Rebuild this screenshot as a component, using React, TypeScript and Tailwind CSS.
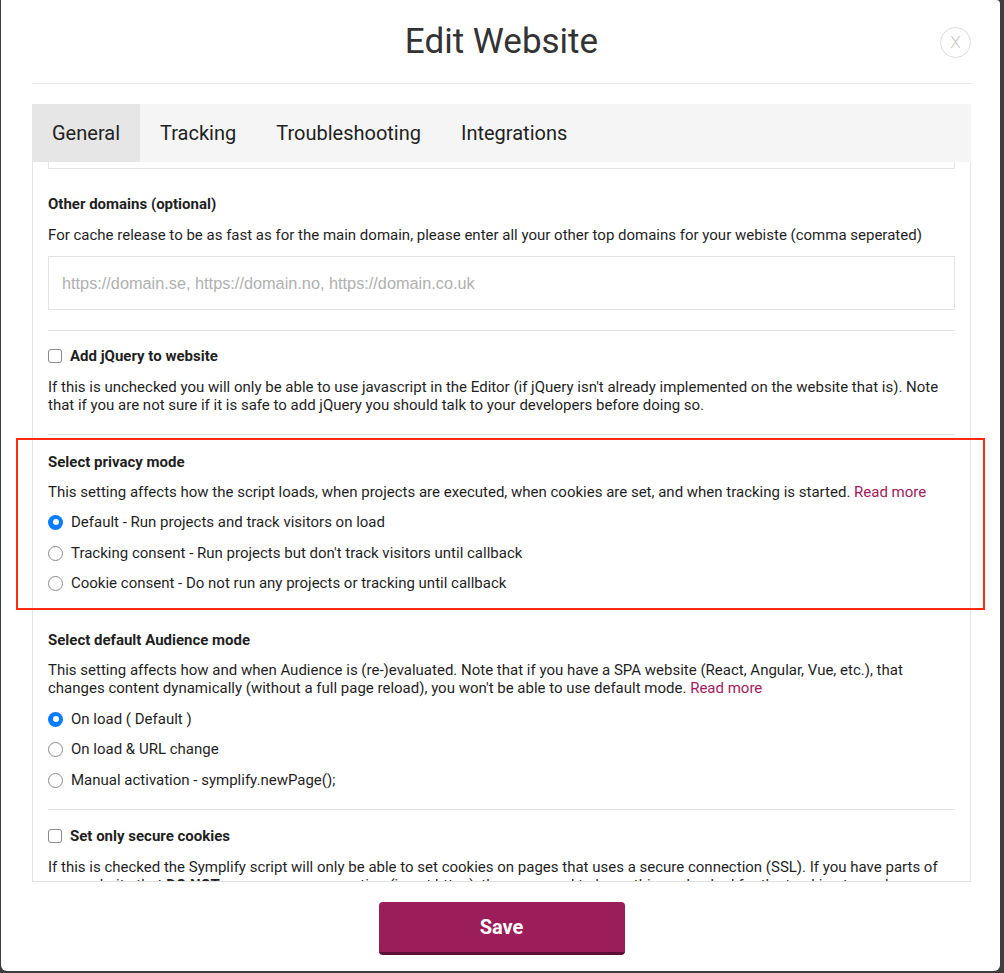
import React from "react";

const Radio = ({ checked }: { checked?: boolean }) =>
  checked ? (
    <span className="w-[15px] h-[15px] rounded-full bg-[#0a7cff] flex items-center justify-center shrink-0">
      <span className="w-[6px] h-[6px] rounded-full bg-white" />
    </span>
  ) : (
    <span className="w-[15px] h-[15px] rounded-full border border-[#8a8a8a] bg-white shrink-0" />
  );

const Checkbox = () => (
  <span className="w-[14px] h-[14px] rounded-[3px] border border-[#8a8a8a] bg-white shrink-0" />
);

const RadioRow = ({ checked, label, mt }: { checked?: boolean; label: string; mt: string }) => (
  <div className={`flex items-center gap-[8px] h-[18px] ${mt}`}>
    <Radio checked={checked} />
    <span>{label}</span>
  </div>
);

export default function App() {
  return (
    <div
      className="relative w-[1004px] h-[973px] bg-[#3d3d3d] text-[#1f1f1f]"
      style={{ fontFamily: "Roboto, 'Noto Sans', sans-serif" }}
    >
      <div className="ml-[1px] w-[999px] h-[971px] bg-white rounded-b-[6px] rounded-tr-[4px] pl-[31px] pr-[29px] flex flex-col">
        {/* Header */}
        <div className="relative h-[84px] flex items-center justify-center border-b border-[#e3e3e3]">
          <h1 className="text-[35px] leading-none text-[#333]">Edit Website</h1>
          <div className="absolute right-0 top-[27px] w-[31px] h-[31px] rounded-full border border-[#dcdcdc] flex items-center justify-center text-[#c8c8c8] text-[17px] font-light">
            X
          </div>
        </div>

        {/* Tabs */}
        <div className="mt-[20px] h-[58px] bg-[#f5f5f5] flex text-[20px] text-[#222]">
          <div className="px-[20px] flex items-center bg-[#e6e6e6]">General</div>
          <div className="px-[20px] flex items-center">Tracking</div>
          <div className="px-[20px] flex items-center">Troubleshooting</div>
          <div className="px-[20px] flex items-center">Integrations</div>
        </div>

        {/* Scroll panel */}
        <div className="h-[720px] border-x border-b border-[#e3e3e3] overflow-hidden px-[15px] text-[15px] leading-[18px]">
          <div className="h-[7px] border-x border-b border-[#e3e3e3]" />

          <div className="mt-[26px] font-bold">Other domains (optional)</div>
          <div className="mt-[13px]">
            For cache release to be as fast as for the main domain, please enter all your other top domains for your webiste (comma seperated)
          </div>
          <div
            className="mt-[12px] h-[54px] border border-[#e3e3e3] flex items-center pl-[13px] text-[16.3px] text-[#b0b0b0]"
            style={{ fontFamily: "'Liberation Sans', Arial, sans-serif" }}
          >
            https://domain.se, https://domain.no, https://domain.co.uk
          </div>
          <div className="mt-[20px] border-t border-[#e3e3e3]" />

          <div className="mt-[16px] flex items-center gap-[8px] h-[18px] font-bold">
            <Checkbox />
            <span>Add jQuery to website</span>
          </div>
          <div className="mt-[13px]">
            If this is unchecked you will only be able to use javascript in the Editor (if jQuery isn't already implemented on the website that is). Note that if you are not sure if it is safe to add jQuery you should talk to your developers before doing so.
          </div>
          <div className="mt-[20px] border-t border-[#e3e3e3]" />

          <div className="mt-[18px] font-bold">Select privacy mode</div>
          <div className="mt-[12px]">
            This setting affects how the script loads, when projects are executed, when cookies are set, and when tracking is started.{" "}
            <span className="text-[#a11a5c]">Read more</span>
          </div>
          <RadioRow mt="mt-[12px]" checked label="Default - Run projects and track visitors on load" />
          <RadioRow mt="mt-[13px]" label="Tracking consent - Run projects but don't track visitors until callback" />
          <RadioRow mt="mt-[12px]" label="Cookie consent - Do not run any projects or tracking until callback" />

          <div className="mt-[39px] font-bold">Select default Audience mode</div>
          <div className="mt-[12px]">
            This setting affects how and when Audience is (re-)evaluated. Note that if you have a SPA website (React, Angular, Vue, etc.), that changes content dynamically (without a full page reload), you won't be able to use default mode.{" "}
            <span className="text-[#a11a5c]">Read more</span>
          </div>
          <RadioRow mt="mt-[13px]" checked label="On load ( Default )" />
          <RadioRow mt="mt-[12px]" label="On load & URL change" />
          <RadioRow mt="mt-[13px]" label="Manual activation - symplify.newPage();" />
          <div className="mt-[20px] border-t border-[#e3e3e3]" />

          <div className="mt-[17px] flex items-center gap-[8px] h-[18px] font-bold">
            <Checkbox />
            <span>Set only secure cookies</span>
          </div>
          <div className="mt-[13px]">
            If this is checked the Symplify script will only be able to set cookies on pages that uses a secure connection (SSL). If you have parts of your website that <b>DO NOT</b> use a secure connection (is not https), then you need to leave this unchecked for the tracking to work as expected.
          </div>
        </div>

        {/* Footer */}
        <div className="flex justify-center mt-[20px]">
          <button className="w-[246px] h-[53px] rounded-[4px] bg-[#9b1d5a] border-b-[3px] border-[#5e0f36] text-white text-[20px] font-bold">
            Save
          </button>
        </div>
      </div>

      {/* Red annotation box */}
      <div className="absolute left-[16px] top-[438px] w-[969px] h-[172px] border-2 border-[#ff2a12] pointer-events-none" />
    </div>
  );
}
